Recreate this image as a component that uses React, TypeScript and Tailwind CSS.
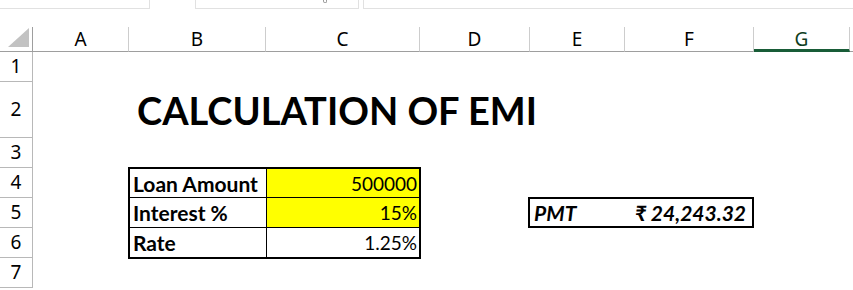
import React from 'react';

const cols = ['A', 'B', 'C', 'D', 'E', 'F', 'G'];
const rowHeights = ['h-[30px]', 'h-[56px]', 'h-[30px]', 'h-[30px]', 'h-[30px]', 'h-[30px]', 'h-[30px]'];

const cellFont = { fontFamily: 'Lato, "Open Sans", sans-serif' };
const headFont = { fontFamily: '"Noto Sans", "Open Sans", sans-serif' };

const App: React.FC = () => {
  return (
    <div className="w-[853px] h-[290px] bg-white overflow-hidden relative text-black">
      {/* formula bar remnants */}
      <div className="flex h-[27px] items-start">
        <div className="w-[150px] h-[9px] border-r border-b border-[#e1e1e1]" />
        <div className="w-[45px]" />
        <div className="w-[164px] h-[9px] border-x border-b border-[#e1e1e1] relative">
          <div className="absolute left-[127px] top-0 w-[4px] h-[3px] border-x border-b border-[#9a9a9a] rounded-b-sm" />
        </div>
        <div className="w-[4px]" />
        <div className="flex-1 h-[9px] border-l border-b border-[#e1e1e1]" />
      </div>

      <div
        className="grid grid-cols-[33px_96px_137px_154px_110px_95px_129px_96px_1fr] grid-rows-[25px_30px_56px_30px_30px_30px_30px_30px]"
      >
        {/* corner */}
        <div className="col-start-1 row-start-1 border-r border-b border-[#9e9e9e] flex items-end justify-end pr-[3px] pb-[4px]">
          <svg width="21" height="19" viewBox="0 0 21 19">
            <polygon points="21,0 21,19 0,19" fill="#c2c2c2" />
          </svg>
        </div>

        {/* column headers */}
        {cols.map((c, i) => (
          <div
            key={c}
            style={{ ...headFont, gridColumnStart: i + 2 }}
            className={`row-start-1 flex items-center justify-center text-[19px] leading-none border-r border-[#cdcdcd] ${
              c === 'G' ? 'border-b-[3px] border-b-[#185c37] pt-[2px]' : 'border-b border-b-[#9e9e9e]'
            }`}
          >
            <span className={c === 'G' ? 'text-[#0f3d22]' : ''}>{c}</span>
          </div>
        ))}
        <div className="col-start-9 row-start-1 border-b border-[#9e9e9e]" />

        {/* row headers */}
        {rowHeights.map((h, i) => (
          <div
            key={i}
            style={{ ...headFont, gridRowStart: i + 2 }}
            className="col-start-1 flex items-center justify-center text-[19px] leading-none border-r border-b border-[#b8b8b8]"
          >
            {i + 1}
          </div>
        ))}

        {/* title */}
        <div
          style={cellFont}
          className="col-start-3 col-span-5 row-start-3 flex items-end pl-[8px] pb-[9px] text-[38px] font-bold leading-none whitespace-nowrap"
        >
          CALCULATION OF EMI
        </div>

        {/* input table */}
        <div
          style={cellFont}
          className="col-start-3 col-span-2 row-start-5 row-span-3 -m-px border-2 border-black grid grid-cols-[137px_1fr] grid-rows-3 text-[19px] leading-none"
        >
          <div className="border-r border-b border-black font-bold text-[21px] flex items-center pl-[3px]">Loan Amount</div>
          <div className="border-b border-black bg-[#ffff00] flex items-center justify-end pr-[2px]">500000</div>
          <div className="border-r border-b border-black font-bold text-[21px] flex items-center pl-[3px]">Interest %</div>
          <div className="border-b border-black bg-[#ffff00] flex items-center justify-end pr-[2px]">15%</div>
          <div className="border-r border-black font-bold text-[21px] flex items-center pl-[3px]">Rate</div>
          <div className="flex items-center justify-end pr-[2px]">1.25%</div>
        </div>

        {/* PMT result */}
        <div
          style={cellFont}
          className="col-start-6 col-span-2 row-start-6 -ml-[2px] -mt-px h-[31px] border-2 border-black grid grid-cols-[97px_1fr] text-[21px] leading-none font-bold italic"
        >
          <div className="flex items-center pl-[4px]">PMT</div>
          <div className="flex items-center pl-[8px]">₹ 24,243.32</div>
        </div>
      </div>
    </div>
  );
};

export default App;
